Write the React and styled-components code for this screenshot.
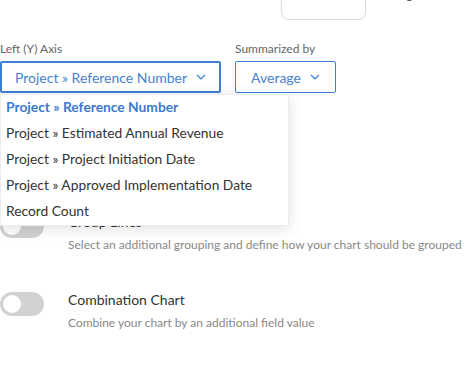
import React from 'react';
import styled, { createGlobalStyle } from 'styled-components';

const GlobalStyle = createGlobalStyle`
  html, body {
    margin: 0;
    padding: 0;
    background: #fff;
    font-family: Lato, "Open Sans", sans-serif;
  }
`;

const fields = [
  'Project » Reference Number',
  'Project » Estimated Annual Revenue',
  'Project » Project Initiation Date',
  'Project » Approved Implementation Date',
  'Record Count',
];

const Chevron = () => (
  <svg width="10" height="6" viewBox="0 0 10 6">
    <polyline points="1,1 5,5 9,1" fill="none" stroke="#3d7fd6" strokeWidth="1.2" />
  </svg>
);

const App = () => {
  return (
    <Page>
      <GlobalStyle />
      <TopStrip>
        <PreviewCard />
        <CutLabel>Showing</CutLabel>
      </TopStrip>

      <AxisRow>
        <Field>
          <Label>Left (Y) Axis</Label>
          <Select $focused $width={221}>
            Project » Reference Number
            <Chevron />
          </Select>
        </Field>
        <Field>
          <Label>Summarized by</Label>
          <Select $width={101}>
            Average
            <Chevron />
          </Select>
        </Field>
        <Menu>
          {fields.map((f, i) => (
            <MenuItem key={f} $active={i === 0}>
              {f}
            </MenuItem>
          ))}
        </Menu>
      </AxisRow>

      <Options>
        <Option>
          <Toggle />
          <OptionText>
            <OptionTitle>Group Lines</OptionTitle>
            <OptionDesc>Select an additional grouping and define how your chart should be grouped</OptionDesc>
          </OptionText>
        </Option>
        <Option>
          <Toggle />
          <OptionText>
            <OptionTitle>Combination Chart</OptionTitle>
            <OptionDesc>Combine your chart by an additional field value</OptionDesc>
          </OptionText>
        </Option>
      </Options>
    </Page>
  );
};

const Page = styled.div`
  width: 467px;
  height: 372px;
  overflow: hidden;
  position: relative;
`;

const TopStrip = styled.div`
  display: flex;
  align-items: flex-end;
  height: 20px;
  overflow: hidden;
`;

const PreviewCard = styled.div`
  margin-left: 281px;
  width: 83px;
  height: 60px;
  border: 1px solid #dcdcdc;
  border-radius: 8px;
  box-shadow: 0 1px 2px rgba(0, 0, 0, 0.06);
  flex-shrink: 0;
`;

const CutLabel = styled.span`
  align-self: flex-start;
  margin-top: -13px;
  margin-left: -2px;
  font-size: 13px;
  line-height: 14px;
  color: #555;
`;

const AxisRow = styled.div`
  position: relative;
  display: flex;
  gap: 14px;
  margin-top: 22px;
`;

const Field = styled.div`
  display: flex;
  flex-direction: column;
`;

const Label = styled.div`
  font-size: 12px;
  line-height: 14px;
  color: #666;
  margin-bottom: 5px;
`;

const Select = styled.div`
  box-sizing: border-box;
  width: ${(p) => p.$width}px;
  height: 32px;
  display: flex;
  align-items: center;
  justify-content: center;
  gap: 9px;
  border: ${(p) => (p.$focused ? '2px' : '1px')} solid #3d7fd6;
  border-radius: 2px;
  color: #4a7fcc;
  font-size: 14px;
`;

const Menu = styled.div`
  position: absolute;
  top: 52px;
  left: 0;
  width: 287px;
  padding: 0;
  background: #fff;
  border: 1px solid #ececec;
  box-shadow: 0 3px 14px rgba(0, 0, 0, 0.12);
  z-index: 2;
`;

const MenuItem = styled.div`
  height: 26px;
  display: flex;
  align-items: center;
  padding-left: 5px;
  font-size: 13.8px;
  line-height: 16px;
  padding-bottom: 2px;
  box-sizing: border-box;
  color: ${(p) => (p.$active ? '#3a78d0' : '#333')};
  font-weight: ${(p) => (p.$active ? 700 : 400)};
`;

const Options = styled.div`
  display: flex;
  flex-direction: column;
  gap: 40px;
  margin-top: 121px;
`;

const Option = styled.div`
  display: flex;
  gap: 24px;
`;

const Toggle = styled.div`
  position: relative;
  width: 44px;
  height: 24px;
  border-radius: 12px;
  background: #d2d2d2;
  flex-shrink: 0;

  &::after {
    content: '';
    position: absolute;
    top: 3px;
    left: 3px;
    width: 18px;
    height: 18px;
    border-radius: 50%;
    background: #fff;
  }
`;

const OptionText = styled.div`
  display: flex;
  flex-direction: column;
`;

const OptionTitle = styled.div`
  font-size: 14px;
  line-height: 16px;
  color: #333;
`;

const OptionDesc = styled.div`
  margin-top: 8px;
  font-size: 12px;
  line-height: 14px;
  color: #888;
  white-space: nowrap;
`;

export default App;
